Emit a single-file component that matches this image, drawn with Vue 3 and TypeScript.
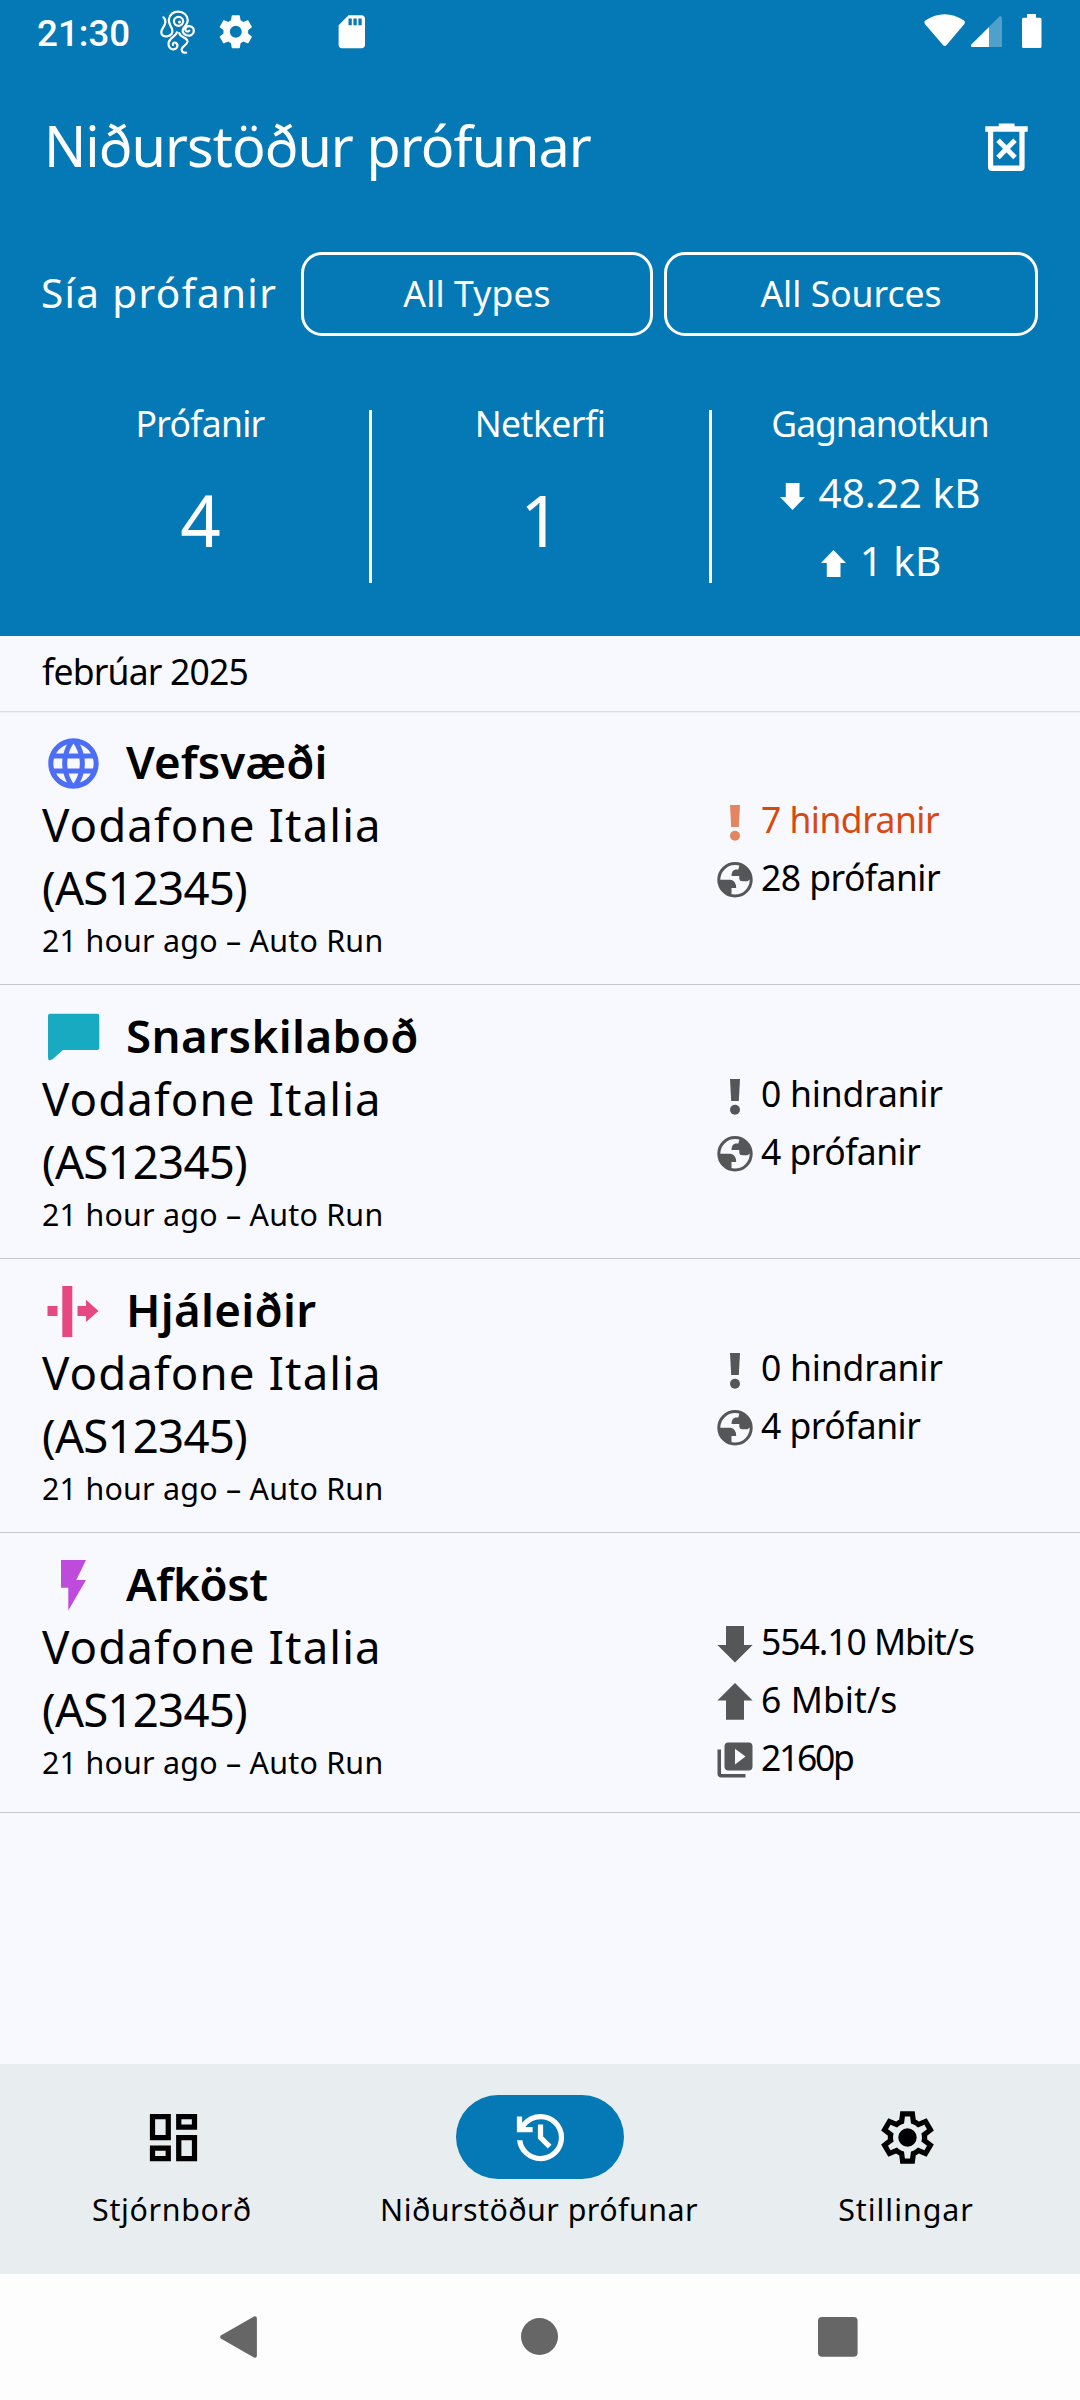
<script setup lang="ts">
type StatIcon = 'alert' | 'globe' | 'down' | 'up' | 'video'
type TestIcon = 'websites' | 'messaging' | 'circumvention' | 'performance'

interface Stat {
  icon: StatIcon
  text: string
  tracking: number
  warn?: boolean
}

interface Result {
  icon: TestIcon
  name: string
  tracking: number
  stats: Stat[]
}

const results: Result[] = [
  {
    icon: 'websites',
    name: 'Vefsvæði',
    tracking: 0.07,
    stats: [
      { icon: 'alert', text: '7 hindranir', tracking: -0.54, warn: true },
      { icon: 'globe', text: '28 prófanir', tracking: -0.54 },
    ],
  },
  {
    icon: 'messaging',
    name: 'Snarskilaboð',
    tracking: 0.47,
    stats: [
      { icon: 'alert', text: '0 hindranir', tracking: -0.21 },
      { icon: 'globe', text: '4 prófanir', tracking: -0.53 },
    ],
  },
  {
    icon: 'circumvention',
    name: 'Hjáleiðir',
    tracking: 0.33,
    stats: [
      { icon: 'alert', text: '0 hindranir', tracking: -0.21 },
      { icon: 'globe', text: '4 prófanir', tracking: -0.53 },
    ],
  },
  {
    icon: 'performance',
    name: 'Afköst',
    tracking: -0.29,
    stats: [
      { icon: 'down', text: '554.10 Mbit/s', tracking: -1.05 },
      { icon: 'up', text: '6 Mbit/s', tracking: 0.06 },
      { icon: 'video', text: '2160p', tracking: -2.28 },
    ],
  },
]
</script>

<template>
  <div class="screen">
    <header class="header">
      <div class="status-bar">
        <span class="time">21:30</span>
        <svg class="octopus" viewBox="466 28 102 132" preserveAspectRatio="none">
          <g fill="none" stroke="#fff" stroke-width="6.5" stroke-linecap="round">
            <path d="M476 50C488 62 478 76 472 86C466 100 474 109 486 107C500 105 504 97 501 84C495 74 491 66 492 56C495 40 506 33 519 33C534 33 546 43 547 58C547 70 537 78 533 86C529 96 540 106 552 105C562 103 567 94 563 83C557 73 542 75 540 84C539 92 546 95 551 90" />
            <circle cx="520" cy="62" r="13.5" />
            <path d="M515 95C514 106 494 110 491 126C489 140 498 147 506 146C517 145 520 133 513 127C507 123 502 128 504 133" />
            <path d="M522 97C525 112 547 110 546 123C544 136 531 135 529 146C529 155 536 157 542 156" />
          </g>
          <circle cx="523" cy="64" r="4.5" fill="#fff" />
        </svg>
        <svg class="status-gear" viewBox="0 0 24 24" fill="#fff">
          <path d="M19.43 12.98c.04-.32.07-.64.07-.98s-.03-.66-.07-.98l2.11-1.65c.19-.15.24-.42.12-.64l-2-3.46c-.12-.22-.39-.3-.61-.22l-2.49 1c-.52-.4-1.08-.73-1.69-.98l-.38-2.65C14.46 2.18 14.25 2 14 2h-4c-.25 0-.46.18-.49.42l-.38 2.65c-.61.25-1.17.59-1.69.98l-2.49-1c-.23-.09-.49 0-.61.22l-2 3.46c-.13.22-.07.49.12.64l2.11 1.65c-.04.32-.07.65-.07.98s.03.66.07.98l-2.11 1.65c-.19.15-.24.42-.12.64l2 3.46c.12.22.39.3.61.22l2.49-1c.52.4 1.08.73 1.69.98l.38 2.65c.03.24.24.42.49.42h4c.25 0 .46-.18.49-.42l.38-2.65c.61-.25 1.17-.59 1.69-.98l2.49 1c.23.09.49 0 .61-.22l2-3.46c.12-.22.07-.49-.12-.64l-2.11-1.65zM12 15.6a3.6 3.6 0 1 1 0-7.2 3.6 3.6 0 0 1 0 7.2z" />
        </svg>
        <svg class="sd-card" viewBox="0 0 24 24" fill="#fff">
          <path d="M18 2h-8L4.02 8 4 20c0 1.100.9 2 2 2h12c1.100 0 2-.9 2-2V4c0-1.100-.9-2-2-2zm-6 6h-2V4h2v4zm3 0h-2V4h2v4zm3 0h-2V4h2v4z" />
        </svg>
        <svg class="system-icons" viewBox="920 0 125 63" fill="#fff">
          <path d="M925.300 20.600Q944.600 7.800 964 20.600Q965.800 22 964.400 23.900L946.600 44.900Q944.700 47 942.900 44.900L924.900 23.900Q923.500 22 925.300 20.600Z" />
          <path d="M1002 47V18Q1001.500 15.500 999.300 16.600L989 27V47Z" opacity="0.3" />
          <path d="M989 27L971.300 44.600Q970 46.500 972 47H989Z" />
          <path d="M1027 14H1036V17.700H1040Q1041.500 17.700 1041.500 19.200V46.500Q1041.500 48 1040 48H1023.500Q1022 48 1022 46.500V19.200Q1022 17.700 1023.500 17.700H1027Z" />
        </svg>
      </div>

      <div class="title-bar">
        <h1>Niðurstöður prófunar</h1>
        <svg class="trash" viewBox="984 122 46 50">
          <path fill="#fff" fill-rule="evenodd" d="M998.700 123.500H1014.600V126.300H1027.700V131.700H1024.600V167Q1024.600 171 1020.600 171H992Q988 171 988 167V131.700H985.300V126.300H998.700ZM993.200 131.700V165.600H1019.400V131.700Z" />
          <path d="M998 140.200L1015 157.400M1015 140.200L998 157.400" stroke="#fff" stroke-width="5" />
        </svg>
      </div>

      <div class="filters">
        <span class="filter-label">Sía prófanir</span>
        <button class="filter types" type="button">All Types</button>
        <button class="filter sources" type="button">All Sources</button>
      </div>

      <div class="summary">
        <div class="cell">
          <span class="cell-label tests">Prófanir</span>
          <span class="number">4</span>
        </div>
        <div class="rule"></div>
        <div class="cell">
          <span class="cell-label networks">Netkerfi</span>
          <span class="number">1</span>
        </div>
        <div class="rule"></div>
        <div class="cell">
          <span class="cell-label usage">Gagnanotkun</span>
          <span class="traffic received">
            <svg viewBox="0 0 25 27" fill="#fff"><path d="M5.800 0H19.500V14H25L12.500 27L0 14H5.800Z" /></svg>
            <span>48.22 kB</span>
          </span>
          <span class="traffic sent">
            <svg viewBox="0 0 25 27" fill="#fff"><path d="M5.800 27H19.500V13H25L12.500 0L0 13H5.800Z" /></svg>
            <span>1 kB</span>
          </span>
        </div>
      </div>
    </header>

    <main class="list">
      <h2 class="month">febrúar 2025</h2>
      <article v-for="result in results" :key="result.icon" class="result" :class="result.icon">
        <div class="details">
          <div class="heading">
            <svg v-if="result.icon === 'websites'" class="test-icon" viewBox="-0.500 -0.500 25 25" fill="#4c6ef5">
              <path d="M11.990 2C6.470 2 2 6.480 2 12s4.470 10 9.990 10C17.520 22 22 17.520 22 12S17.520 2 11.990 2zm6.930 6h-2.950c-.32-1.250-.78-2.450-1.380-3.560 1.840.63 3.370 1.910 4.330 3.560zM12 4.040c.83 1.200 1.480 2.530 1.910 3.960h-3.820c.43-1.430 1.080-2.760 1.910-3.960zM4.260 14C4.100 13.360 4 12.690 4 12s.1-1.360.26-2h3.380c-.08.66-.14 1.320-.14 2s.06 1.340.14 2H4.260zm.82 2h2.950c.32 1.250.78 2.450 1.380 3.560-1.840-.63-3.370-1.900-4.330-3.560zm2.950-8H5.080c.96-1.660 2.490-2.930 4.330-3.560C8.810 5.550 8.350 6.750 8.030 8zM12 19.960c-.83-1.200-1.480-2.530-1.910-3.960h3.820c-.43 1.430-1.080 2.760-1.910 3.960zM14.340 14H9.660c-.09-.66-.16-1.320-.16-2s.07-1.350.16-2h4.680c.09.65.16 1.320.16 2s-.07 1.340-.16 2zm.25 5.560c.6-1.110 1.060-2.310 1.380-3.560h2.950c-.96 1.650-2.490 2.930-4.330 3.560zM16.360 14c.08-.66.14-1.320.14-2s-.06-1.340-.14-2h3.380c.16.64.26 1.310.26 2s-.1 1.360-.26 2h-3.380z" />
            </svg>
            <svg v-else-if="result.icon === 'messaging'" class="test-icon" viewBox="0 0 63 63" fill="#17aac1">
              <path d="M8 7.700H55.300a2 2 0 0 1 2 2V42a2 2 0 0 1-2 2H21L10.500 53.200Q6 56 6 51.500V9.700a2 2 0 0 1 2-2z" />
            </svg>
            <svg v-else-if="result.icon === 'circumvention'" class="test-icon" viewBox="0 0 63 63" fill="#e64980">
              <path d="M5.500 26H15.500V36H5.500ZM20.300 6H30.300V57H20.300ZM35.500 26H44V19.700L56.500 31L44 42V36H35.500Z" />
            </svg>
            <svg v-else class="test-icon" viewBox="0 0 63 63" fill="#be4bdb">
              <path d="M19 6H44L34.300 26H44L26.300 56.500V33.800H19Z" />
            </svg>
            <h3 :style="{ letterSpacing: result.tracking + 'px' }">{{ result.name }}</h3>
          </div>
          <p class="network">
            <span class="isp">Vodafone Italia</span>
            <span class="asn">(AS12345)</span>
          </p>
          <p class="when">21 hour ago – Auto Run</p>
        </div>
        <ul class="stats">
          <li v-for="stat in result.stats" :key="stat.text" :class="{ warn: stat.warn }">
            <svg v-if="stat.icon === 'alert'" viewBox="0 0 42 42">
              <path d="M16 4H26L24.800 26H17.200Z" /><circle cx="21" cy="34.700" r="5" />
            </svg>
            <svg v-else-if="stat.icon === 'globe'" viewBox="0 0 42 42">
              <circle cx="21" cy="20.800" r="16.200" fill="none" stroke="currentColor" stroke-width="3" />
              <path d="M25.500 6L24.300 10.600H21.500Q17.500 11.500 17.500 17H25.300V19.800Q25.600 22.300 28.500 22.300H33.500L36.500 20A16 16 0 0 0 25.500 6Z" />
              <path d="M5 20.800H16.500Q22 21.500 22.200 29H17.500V36.500A16 16 0 0 1 5 20.800Z" />
            </svg>
            <svg v-else-if="stat.icon === 'down'" viewBox="0 0 42 42">
              <path d="M12 3H30V22H38.600L21 39.500L3.400 22H12Z" />
            </svg>
            <svg v-else-if="stat.icon === 'up'" viewBox="0 0 42 42">
              <path d="M12 38.800H30V19.500H38.600L21 2L3.400 19.500H12Z" />
            </svg>
            <svg v-else viewBox="0 0 24 24">
              <path d="M4 6H2v14c0 1.100.9 2 2 2h14v-2H4V6zm16-4H8c-1.100 0-2 .9-2 2v12c0 1.100.9 2 2 2h12c1.100 0 2-.9 2-2V4c0-1.100-.9-2-2-2zm-8 12.500v-9l6 4.500-6 4.500z" />
            </svg>
            <span :style="{ letterSpacing: stat.tracking + 'px' }">{{ stat.text }}</span>
          </li>
        </ul>
      </article>
    </main>

    <nav class="tabs">
      <a class="tab">
        <span class="pill">
          <svg viewBox="0 0 24 24">
            <path d="M19 5v2h-4V5h4M9 5v6H5V5h4m10 8v6h-4v-6h4M9 17v2H5v-2h4M21 3h-8v6h8V3zM11 3H3v10h8V3zm10 8h-8v10h8V11zm-10 4H3v6h8v-6z" />
          </svg>
        </span>
        <span class="dashboard">Stjórnborð</span>
      </a>
      <a class="tab active">
        <span class="pill">
          <svg viewBox="0 0 24 24">
            <path d="M12 21q-3.450 0-6.012-2.287T3.050 13H5.100q.35 2.600 2.313 4.300T12 19q2.925 0 4.963-2.037T19 12t-2.037-4.962T12 5q-1.725 0-3.225.8T6.250 8H9v2H3V4h2v2.350q1.275-1.600 3.113-2.475T12 3q1.875 0 3.513.713t2.850 1.924 1.925 2.850T21 12t-.712 3.513-1.925 2.850-2.850 1.925T12 21m2.800-4.800L11 12.400V7h2v4.600l3.200 3.200z" />
          </svg>
        </span>
        <span class="results">Niðurstöður prófunar</span>
      </a>
      <a class="tab">
        <span class="pill">
          <svg viewBox="0 0 24 24">
            <path fill-rule="evenodd" d="M9.250 22l-.4-3.200q-.325-.125-.612-.3t-.563-.375L4.700 19.375l-2.750-4.750 2.575-1.950Q4.500 12.500 4.500 12.338v-.675q0-.163.025-.338L1.950 9.375l2.750-4.750 2.975 1.250q.275-.2.575-.375t.6-.3l.4-3.200h5.500l.4 3.200q.325.125.613.3t.562.375l2.975-1.250 2.750 4.750-2.575 1.950q.025.175.025.338v.674q0 .163-.05.338l2.575 1.950-2.750 4.750-2.950-1.250q-.275.2-.575.375t-.6.3l-.4 3.200zM11 20h1.975l.35-2.650q.775-.2 1.438-.587t1.212-.938l2.475 1.025.975-1.700-2.150-1.625q.125-.35.175-.737T17.500 12t-.05-.787-.175-.738l2.150-1.625-.975-1.700-2.475 1.050q-.55-.575-1.212-.962t-1.438-.588L13 4h-1.975l-.35 2.650q-.775.2-1.437.588t-1.213.937L5.550 7.150l-.975 1.700 2.150 1.600q-.125.375-.175.75t-.05.8q0 .4.05.775t.175.75l-2.150 1.625.975 1.700 2.475-1.050q.55.575 1.213.963t1.437.587z" />
            <circle cx="12" cy="12" r="3.500" />
          </svg>
        </span>
        <span class="settings">Stillingar</span>
      </a>
    </nav>

    <div class="system-nav">
      <svg viewBox="200 0 80 126"><path d="M254 42.600Q256.800 41.600 256.900 44.500V81.500Q256.800 84.700 254 83.500L221.200 64.800Q219 63 221.200 61.200Z" /></svg>
      <svg viewBox="500 0 80 126"><circle cx="539.500" cy="62.500" r="18.500" /></svg>
      <svg viewBox="800 0 80 126"><rect x="818" y="43" width="39.600" height="39.800" rx="4" /></svg>
    </div>
  </div>
</template>

<style>
body {
  margin: 0;
}
</style>

<style scoped>
.screen {
  width: 1080px;
  height: 2400px;
  display: flex;
  flex-direction: column;
  overflow: hidden;
  background: #f8f9fe;
  color: #000;
  font-family: "Noto Sans", "Open Sans", sans-serif;
  font-size: 35.5px;
}

svg {
  display: block;
  flex: none;
}

h1,
h2,
h3,
p,
ul {
  margin: 0;
  padding: 0;
  font-weight: 400;
}

.header {
  flex: none;
  height: 636px;
  background: #0479b5;
  color: #fff;
}

.status-bar {
  display: flex;
  align-items: center;
  height: 63px;
  padding-left: 37px;
}

.time {
  width: 123px;
  padding-top: 4px;
  font: 500 36.750px/59px Roboto, sans-serif;
}

.octopus {
  width: 35px;
  height: 44px;
}

.status-gear {
  width: 39.600px;
  height: 39.600px;
  margin-left: 21px;
}

.sd-card {
  width: 39.600px;
  height: 39.600px;
  margin-left: 76px;
}

.system-icons {
  width: 125px;
  height: 63px;
  margin: 0 35px 0 auto;
}

.title-bar {
  display: flex;
  align-items: center;
  justify-content: space-between;
  height: 163px;
  padding: 0 50px 0 44px;
}

h1 {
  font-size: 55.700px;
  line-height: 80px;
  letter-spacing: -0.950px;
}

.trash {
  width: 46px;
  height: 50px;
  margin-top: 4px;
}

.filters {
  display: flex;
  height: 84px;
  margin-top: 26px;
  padding: 0 42px 0 41px;
}

.filter-label {
  width: 260px;
  font-size: 40.500px;
  line-height: 82px;
  letter-spacing: 1.340px;
}

.filter {
  box-sizing: border-box;
  height: 84px;
  padding: 0 0 2px;
  border: 3px solid #fff;
  border-radius: 21px;
  background: none;
  color: inherit;
  font-family: inherit;
  font-size: 35.500px;
  line-height: 76px;
}

.types {
  width: 352px;
  margin-right: 11px;
  letter-spacing: 0.120px;
}

.sources {
  width: 374px;
}

.summary {
  display: grid;
  grid-template-columns: 1fr 3px 1fr 3px 1fr;
  padding: 62px 31.500px 0;
}

.rule {
  height: 173px;
  margin-top: 12px;
  background: #fff;
}

.cell {
  display: flex;
  flex-direction: column;
  align-items: center;
}

.cell-label {
  line-height: 50px;
}

.tests {
  letter-spacing: -0.700px;
}

.networks {
  letter-spacing: -0.520px;
}

.usage {
  letter-spacing: -1.010px;
}

.number {
  margin-top: 24px;
  padding-left: 1px;
  font-size: 70.900px;
  line-height: 96px;
}

.traffic {
  display: flex;
  align-items: center;
  gap: 14px;
  font-size: 40.500px;
  line-height: 56px;
  letter-spacing: 0;
}

.received {
  margin-top: 17px;
}

.sent {
  margin-top: 12px;
  padding-left: 2px;
}

.traffic svg {
  width: 25px;
  height: 27px;
}

.received svg {
  margin-top: 6px;
}

.sent svg {
  margin-top: 4px;
}

.list {
  flex: 1;
}

.month {
  position: relative;
  height: 75px;
  padding-left: 42px;
  box-shadow: 0 1px 0 #dcdde3, 0 2px 0 #f0f1f7;
  font-size: 35.500px;
  line-height: 70px;
  letter-spacing: -0.800px;
}

.result {
  box-sizing: border-box;
  display: flex;
  height: 274px;
  padding-left: 42px;
  border-bottom: 1px solid #c5c6d0;
}

.result.performance {
  height: 280px;
}

.details {
  width: 672px;
  padding-top: 19px;
}

.heading {
  display: flex;
  gap: 21px;
  height: 63px;
}

.test-icon {
  width: 63px;
  height: 63px;
  margin-top: 2px;
}

h3 {
  font-size: 45.600px;
  font-weight: 600;
  line-height: 63px;
}

.network {
  font-size: 45.600px;
  line-height: 63px;
}

.network span {
  display: block;
}

.isp {
  letter-spacing: 1.100px;
}

.asn {
  letter-spacing: -0.780px;
}

.when {
  font-size: 30.400px;
  line-height: 43px;
  letter-spacing: 0.240px;
}

.stats {
  padding-top: 79px;
  list-style: none;
}

.stats li {
  display: flex;
  align-items: center;
  gap: 5px;
  height: 58px;
  line-height: 58px;
  white-space: nowrap;
}

.stats svg {
  width: 42px;
  height: 42px;
  margin-top: 6px;
  color: #555657;
  fill: currentColor;
}

.stats .warn {
  color: #d9480f;
}

.stats .warn svg {
  color: #e48561;
}

.tabs {
  display: flex;
  gap: 21px;
  height: 210px;
  background: #e8eef0;
}

.tab {
  flex: 1 1 0;
  display: flex;
  flex-direction: column;
  align-items: center;
  padding-top: 31px;
  font-size: 30.400px;
  line-height: 42px;
  white-space: nowrap;
}

.tab > span:last-child {
  padding-right: 2px;
}

.pill {
  display: flex;
  align-items: center;
  justify-content: center;
  width: 168px;
  height: 84px;
  margin-bottom: 10px;
  border-radius: 42px;
}

.pill svg {
  width: 63px;
  height: 63px;
}

.active .pill {
  background: #0479b5;
  fill: #fff;
}

.dashboard {
  letter-spacing: 0.660px;
}

.results {
  letter-spacing: 0.450px;
}

.settings {
  letter-spacing: 0.950px;
}

.system-nav {
  display: flex;
  gap: 220px;
  height: 126px;
  padding-left: 200px;
  background: #fdfdfd;
  fill: #666;
}

.system-nav svg {
  width: 80px;
  height: 126px;
}
</style>
